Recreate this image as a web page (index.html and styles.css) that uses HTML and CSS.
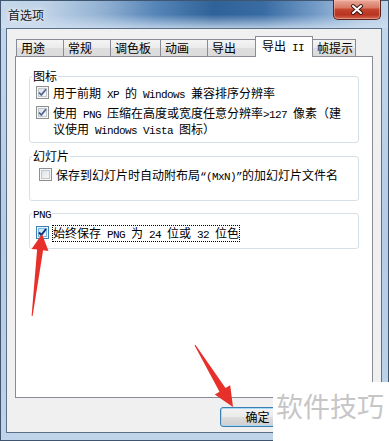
FILE: index.html
```html
<!DOCTYPE html>
<html lang="zh-CN">
<head>
<meta charset="utf-8">
<title>首选项</title>
<link rel="stylesheet" href="styles.css">
</head>
<body>
<div class="window">
  <div class="titlebar">
    <span class="title">首选项</span>
    <div class="close">
      <svg width="46" height="19" viewBox="0 0 46 19">
        <path d="M19 6 L27 13 M27 6 L19 13" stroke="#3b1712" stroke-width="4" stroke-linecap="round"/>
        <path d="M19 6 L27 13 M27 6 L19 13" stroke="#ffffff" stroke-width="2" stroke-linecap="round"/>
      </svg>
    </div>
  </div>
  <div class="frame">
    <div class="client">
      <div class="tabs">
        <div class="tab w48">用途</div>
        <div class="tab w48">常规</div>
        <div class="tab w51">调色板</div>
        <div class="tab w48">动画</div>
        <div class="tab w49">导出</div>
        <div class="tab sel">导出<span class="m"> II</span></div>
        <div class="tab w44">帧提示</div>
      </div>
      <div class="panel">
        <fieldset class="group g1">
          <legend>图标</legend>
          <div class="row">
            <span class="cb"><svg width="11" height="11" viewBox="0 0 11 11"><path d="M2 5.5 L4.3 8 L9 2.3" fill="none" stroke="#4f6590" stroke-width="1.8"/></svg></span>
            <span class="lbl">用于前期<span class="m"> XP </span>的<span class="m"> Windows </span>兼容排序分辨率</span>
          </div>
          <div class="row r2">
            <span class="cb"><svg width="11" height="11" viewBox="0 0 11 11"><path d="M2 5.5 L4.3 8 L9 2.3" fill="none" stroke="#4f6590" stroke-width="1.8"/></svg></span>
            <span class="lbl">使用<span class="m"> PNG </span>压缩在高度或宽度任意分辨率<span class="m">&gt;127 </span>像素（建<br>议使用<span class="m"> Windows Vista </span>图标）</span>
          </div>
        </fieldset>
        <fieldset class="group g2">
          <legend>幻灯片</legend>
          <div class="row shift">
            <span class="cb"></span>
            <span class="lbl">保存到幻灯片时自动附布局<span class="m">“(MxN)”</span>的加幻灯片文件名</span>
          </div>
        </fieldset>
        <fieldset class="group g3">
          <legend><span class="m">PNG</span></legend>
          <div class="row">
            <span class="cb hot"><svg width="11" height="11" viewBox="0 0 11 11"><path d="M2 5.5 L4.3 8 L9 2" fill="none" stroke="#10307a" stroke-width="2"/></svg></span>
            <span class="lbl focus">始终保存<span class="m"> PNG </span>为<span class="m"> 24 </span>位或<span class="m"> 32 </span>位色</span>
          </div>
        </fieldset>
      </div>
      <div class="buttons">
        <button class="btn default">确定</button>
      </div>
    </div>
  </div>
  <svg class="arrows" width="389" height="441" viewBox="0 0 389 441">
    <polygon points="42,234 48.5,251 43.1,250.3 32.6,316 31.6,315.8 37.1,249.5 31.6,249" fill="#e8302a"/>
    <polygon points="233,407 214.8,394.6 219.5,391.7 194.6,345.4 195.4,344.8 225.5,388.1 230.2,385.2" fill="#e8302a"/>
  </svg>
  <div class="watermark">软件技巧</div>
</div>
</body>
</html>
```
FILE: styles.css
```css
* { box-sizing: border-box; }
html, body { margin: 0; padding: 0; }
body {
  width: 389px;
  height: 441px;
  overflow: hidden;
  font-family: "Noto Sans CJK SC", "Noto Sans", sans-serif;
  font-size: 12px;
  color: #000;
  background: #bcd1e8;
}
.window {
  position: relative;
  width: 389px;
  height: 441px;
  border: 1px solid #3f5570;
  display: flex;
  flex-direction: column;
  background: #bcd1e8;
}
.titlebar {
  height: 27px;
  flex: none;
  display: flex;
  align-items: flex-start;
  padding: 0 7px 0 7px;
  background:
    linear-gradient(to bottom, rgba(208,223,240,0) 0%, rgba(208,223,240,0) 50%, rgba(208,223,240,0.8) 100%),
    linear-gradient(to right, #c6d8ea 0%, #bdd1e6 12%, #8fafd1 27%, #5584b7 40%, #2f6298 55%, #3a6ca4 68%, #6d96c3 80%, #a9c4df 92%, #bfd4e9 100%);
}
.title {
  padding-top: 5px;
  line-height: 17px;
  font-size: 12px;
  color: #141414;
  text-shadow: 0 0 6px rgba(255,255,255,0.9), 0 0 3px rgba(255,255,255,0.8);
}
.close {
  margin-left: auto;
  width: 48px;
  height: 20px;
  margin-top: -1px;
  border: 1px solid #5a231c;
  border-top: none;
  border-radius: 0 0 5px 5px;
  background: linear-gradient(to bottom, #e9aa9a 0%, #d87a66 40%, #c4442e 50%, #b83420 78%, #d56a52 100%);
  box-shadow: inset 0 0 0 1px rgba(255,200,190,0.45);
  display: flex;
  align-items: center;
  justify-content: center;
}
.close svg { display: block; }
.frame {
  flex: 1;
  padding: 0 6px 7px 5px;
  background: linear-gradient(to bottom, #c2d6eb 0%, #b6cce5 50%, #bfd3e9 100%);
}
.client {
  height: 405px;
  border: 1px solid #5a6f88;
  background: #f0f0f0;
  display: flex;
  flex-direction: column;
}
.tabs {
  position: relative;
  z-index: 1;
  display: flex;
  align-items: flex-end;
  height: 21px;
  margin: 7px 0 -1px 9px;
}
.tab {
  height: 17px;
  margin-bottom: 1px;
  margin-left: -1px;
  border: 1px solid #898c95;
  border-bottom: none;
  padding-left: 4px;
  line-height: 16px;
  white-space: nowrap;
  background: linear-gradient(to bottom, #f4f4f4 0%, #ebebeb 50%, #dedede 51%, #dbdbdb 100%);
}
.tab:first-child { margin-left: 0; }
.w44 { width: 44px; }
.w48 { width: 48px; }
.w49 { width: 49px; }
.w51 { width: 51px; }
.tab.sel {
  width: 58px;
  height: 21px;
  margin-bottom: 0;
  padding-left: 6px;
  line-height: 17px;
  background: #fff;
}
.panel {
  height: 342px;
  margin: 0 8px 0 8px;
  border: 1px solid #898c95;
  background: #fff;
  padding: 12px 13px 0 13px;
}
.group {
  margin: 0;
  min-inline-size: 0;
  border: 1px solid #d5dfe5;
  border-radius: 3px;
  padding: 2px 6px 5px 6px;
}
.group legend {
  margin-left: -4px;
  padding: 0 1px;
  line-height: 14px;
  font-size: 12px;
}
.g2 { margin-top: 6px; padding-top: 4px; padding-bottom: 17px; }
.g3 { margin-top: 5px; padding-top: 4px; padding-bottom: 6px; }
.row {
  display: flex;
  align-items: flex-start;
}
.r2 { margin-top: 4px; }
.shift { padding-left: 3px; }
.cb {
  flex: none;
  width: 13px;
  height: 13px;
  margin-top: 1px;
  border: 1px solid #8e8f8f;
  background: linear-gradient(135deg, #d8dadf 0%, #eef0f2 60%, #fbfbfb 100%);
  box-shadow: inset 0 0 0 1px #f6f6f6, inset 0 0 0 2px #c3c8ce;
  display: flex;
  align-items: center;
  justify-content: center;
}
.cb svg { display: block; }
.cb.hot {
  border-color: #3c7fb1;
  background: linear-gradient(135deg, #b9dcf3 0%, #dff0fb 60%, #f2f9fe 100%);
  box-shadow: inset 0 0 0 1px #eaf6fd, inset 0 0 0 2px #79b8e0;
}
.lbl {
  margin-left: 4px;
  line-height: 15px;
  white-space: nowrap;
}
.lbl.focus {
  margin-left: 3px;
  line-height: 13px;
  border: 1px dotted #000;
}
.m {
  font-family: "Liberation Mono", monospace;
  font-size: 11px;
  letter-spacing: -0.6px;
  line-height: 1;
}
.buttons {
  display: flex;
  justify-content: flex-start;
  margin-top: 9px;
  padding-left: 213px;
}
.btn {
  width: 75px;
  height: 20px;
  padding: 0;
  font-family: "Noto Sans CJK SC", sans-serif;
  font-size: 12px;
  line-height: 16px;
  color: #000;
  border: 1px solid #707070;
  border-radius: 3px;
  background: linear-gradient(to bottom, #f2f2f2 0%, #ebebeb 48%, #dddddd 52%, #cfcfcf 100%);
  box-shadow: inset 0 0 0 1px #fcfcfc;
}
.btn.default {
  border-color: #3c7fb1;
  box-shadow: inset 0 0 0 1px #a7d8f6;
}
.arrows {
  position: absolute;
  left: -1px;
  top: -1px;
  pointer-events: none;
  z-index: 5;
}
.watermark {
  position: absolute;
  left: 272px;
  top: 381px;
  width: 117px;
  height: 60px;
  background: #fff;
  color: #c6c6c6;
  font-size: 27px;
  line-height: 27px;
  padding: 10px 0 0 3px;
  white-space: nowrap;
  z-index: 4;
}
```
